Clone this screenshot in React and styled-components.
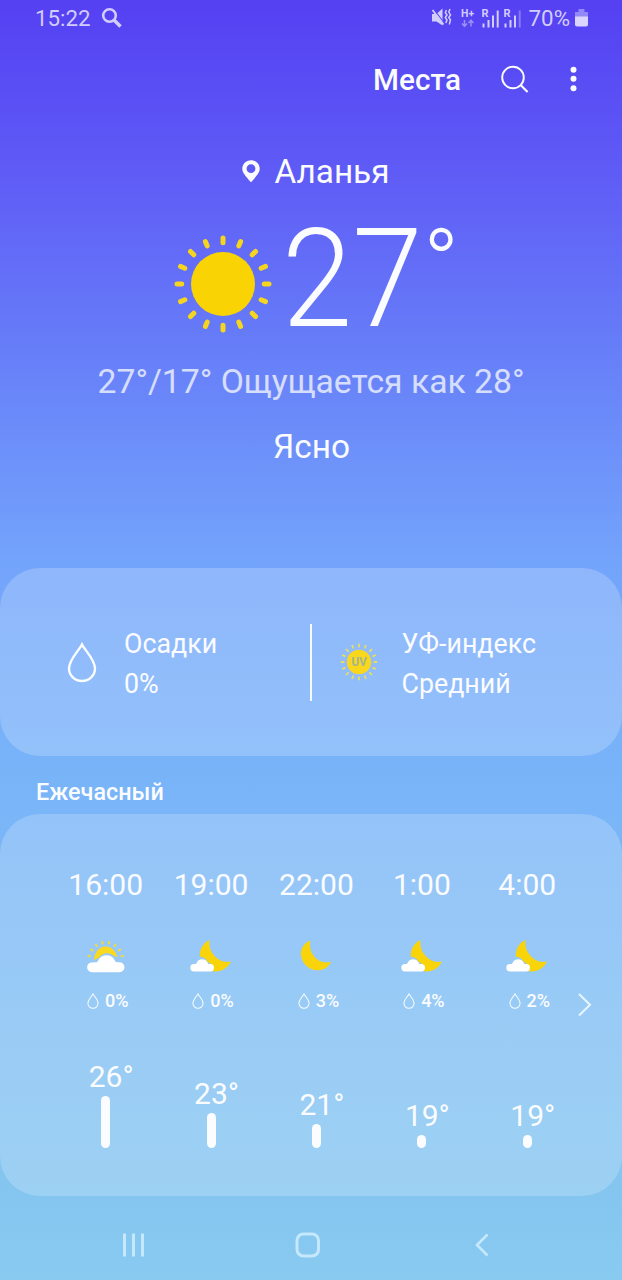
import React from "react";
import styled, { createGlobalStyle } from "styled-components";

const GlobalStyle = createGlobalStyle`
  * {
    box-sizing: border-box;
  }
  body {
    margin: 0;
    font-family: Roboto, "Open Sans", sans-serif;
    color: #fbfcff;
  }
  svg {
    display: block;
    flex: none;
  }
`;

const Screen = styled.div`
  display: flex;
  flex-direction: column;
  width: 622px;
  height: 1280px;
  overflow: hidden;
  background: linear-gradient(
    #5540f2 0,
    #584bf4 70px,
    #5f5bf6 170px,
    #667cf8 340px,
    #6e94fa 470px,
    #73a4fb 565px,
    #78b3f9 760px,
    #85c6f0 1200px,
    #88caf0 1280px
  );
`;

const StatusBar = styled.header`
  display: flex;
  align-items: center;
  justify-content: space-between;
  height: 36px;
  padding: 0 34px 0 35px;
  color: #d2cdfd;
  font-size: 22.3px;
  line-height: 35px;
`;

const StatusGroup = styled.div`
  display: flex;
  align-items: center;
  gap: ${({ gap }) => gap}px;
`;

const Percent = styled.span`
  margin: 0 1px 0 3px;
`;

const Toolbar = styled.nav`
  display: flex;
  align-items: center;
  justify-content: flex-end;
  height: 88px;
  padding-right: 44px;
`;

const PlacesButton = styled.button`
  padding: 0;
  margin-right: 39px;
  border: 0;
  background: transparent;
  color: inherit;
  font-family: inherit;
  font-size: 29.7px;
  font-weight: 500;
  line-height: 40px;
`;

const Hero = styled.section`
  display: flex;
  flex-direction: column;
  align-items: center;
  flex: none;
  height: 444px;
  padding-top: 24px;
`;

const Location = styled.div`
  display: flex;
  align-items: center;
  gap: 15px;
  height: 48px;
  padding-left: 9px;
  font-size: 33.3px;
  line-height: 48px;
`;

const Current = styled.div`
  display: flex;
  align-items: center;
  align-self: flex-start;
  height: 110px;
  margin-top: 28px;
  padding-left: 174px;
`;

const SunBox = styled.div`
  padding-top: 9px;
`;

const Temperature = styled.div`
  width: 143px;
  margin-left: 10px;
  font-size: 137px;
  font-weight: 300;
  line-height: 110px;
  white-space: nowrap;
  transform: scaleX(0.925);
  transform-origin: left;
`;

const DegreeSign = styled.div`
  align-self: flex-start;
  margin-left: -2px;
  font-size: 96px;
  font-weight: 300;
  line-height: 80px;
`;

const Range = styled.div`
  height: 40px;
  margin-top: 28px;
  font-size: 33.7px;
  line-height: 40px;
  opacity: 0.75;
`;

const Condition = styled.div`
  height: 40px;
  margin-top: 25px;
  padding-left: 1px;
  font-size: 33.4px;
  line-height: 40px;
`;

const Card = styled.section`
  flex: none;
  height: ${({ height }) => height}px;
  border-radius: 40px;
  background: rgba(255, 255, 255, 0.2);
`;

const Details = styled(Card)`
  display: grid;
  grid-template-columns: 310px 2px 310px;
  align-items: center;
`;

const Divider = styled.div`
  width: 2px;
  height: 77px;
  background: #f4faff;
`;

const Detail = styled.div`
  display: grid;
  grid-template-columns: ${({ icon }) => icon}px 1fr;
  align-items: center;
  padding-left: ${({ inset }) => inset}px;
  font-size: 26.8px;
  line-height: 40px;
`;

const DetailText = styled.div`
  padding-top: 4px;
`;

const SectionTitle = styled.h2`
  flex: none;
  height: 58px;
  margin: 0;
  padding: 14px 0 0 36px;
  font-size: 23.4px;
  font-weight: 500;
  line-height: 44px;
`;

const Hourly = styled(Card)`
  display: flex;
  align-items: flex-start;
  padding-left: 53px;
`;

const Hour = styled.div`
  display: flex;
  flex-direction: column;
  align-items: center;
  width: 105.4px;
`;

const Time = styled.div`
  margin-top: 51px;
  font-size: 30px;
  line-height: 40px;
`;

const IconBox = styled.div`
  margin-top: 34px;
`;

const Chance = styled.div`
  display: flex;
  align-items: center;
  gap: 6px;
  height: 24px;
  margin-top: 16px;
  padding-left: 4px;
  font-size: 18px;
  font-weight: 500;
  line-height: 24px;
`;

const Graph = styled.div`
  display: flex;
  flex-direction: column;
  align-items: center;
  justify-content: flex-end;
  height: 135px;
`;

const Degrees = styled.div`
  margin-bottom: -1px;
  padding-left: 11px;
  font-size: 30px;
  line-height: 40px;
`;

const Bar = styled.div`
  width: 9px;
  height: ${({ size }) => size}px;
  border-radius: 5px;
  background: #fbfcff;
`;

const NextButton = styled.button`
  display: flex;
  margin-top: 179px;
  margin-left: -2px;
  padding: 0;
  border: 0;
  background: transparent;
`;

const NavBar = styled.footer`
  display: grid;
  grid-template-columns: 268px 80px 268px;
  align-items: center;
  justify-items: center;
  height: 84px;
  padding-top: 14px;
`;

const ray = (angle, cx, cy, from, to) => {
  const a = (angle * Math.PI) / 180;
  return `M${cx + Math.sin(a) * from} ${cy - Math.cos(a) * from}L${
    cx + Math.sin(a) * to
  } ${cy - Math.cos(a) * to}`;
};

const sixteen = Array.from({ length: 16 }, (_, i) => i * 22.5);
const eight = Array.from({ length: 8 }, (_, i) => -78.75 + i * 22.5);

const Sun = () => (
  <svg width="98" height="98" viewBox="0 0 98 98">
    <circle cx="49" cy="49" r="32" fill="#f9d304" />
    <path
      d={sixteen.map((a) => ray(a, 49, 49, 41.3, 46)).join("")}
      stroke="#f6d51e"
      strokeWidth="5"
      strokeLinecap="round"
    />
  </svg>
);

const UvSun = () => (
  <svg width="38" height="38" viewBox="0 0 38 38">
    <circle cx="19" cy="19" r="12.2" fill="#fad61c" />
    <path
      d={sixteen.map((a) => ray(a, 19, 19, 15.4, 17.6)).join("")}
      stroke="#e8de5c"
      strokeWidth="1.8"
      strokeLinecap="round"
    />
    <text
      x="19"
      y="23.2"
      textAnchor="middle"
      fontSize="12"
      fontWeight="700"
      fill="#a5b691"
    >
      UV
    </text>
  </svg>
);

const Pin = () => (
  <svg width="18" height="24" viewBox="0 0 18 24">
    <path
      fillRule="evenodd"
      fill="#fbfcff"
      d="M9 .3C4 .3.3 4.1.3 8.7c0 3.8 2.7 6.6 8.7 13.6 6-7 8.7-9.8 8.7-13.6C17.7 4.1 14 .3 9 .3zM9 4.3a4.4 4.4 0 1 1 0 8.800 4.400 4.400 0 0 1 0-8.800z"
    />
  </svg>
);

const Drop = ({ width, height, stroke }) => (
  <svg width={width} height={height} viewBox="0 0 30 41">
    <path
      d="M15 2.5C12 8.5 2 17.5 2 26.5a13 12.5 0 0 0 26 0C28 17.5 18 8.5 15 2.5z"
      fill="none"
      stroke="#fbfeff"
      strokeWidth={stroke}
    />
  </svg>
);

const PartlySunny = () => (
  <svg width="44" height="34" viewBox="0 0 44 34">
    <path
      d={eight.map((a) => ray(a, 21.7, 20.3, 16, 17.6)).join("")}
      stroke="#efdc3c"
      strokeWidth="2"
      strokeLinecap="round"
    />
    <path
      d="M10 21.5a11.8 13.5 0 0 1 23.3-3.5c-2.4-.2-3.2-1-4.8-2-5-3.5-11.5-1.5-13.6 3.1-1.8.2-3.4 1-4.9 2.400z"
      fill="#fbd91f"
    />
    <path
      d="M8 33.200a4.900 4.900 0 0 1 0-9.800c1.200 0 2.400 0 4-.1 1.200 0 1.700-1 2.300-2.100a9.300 9.300 0 0 1 16.400 0c.6 1.100 1.200 2.100 2.500 2.100h2.300a4.900 4.900 0 0 1 0 9.900z"
      fill="#fff"
    />
  </svg>
);

const CloudyNight = () => (
  <svg width="44" height="34" viewBox="0 0 44 34">
    <path
      d="M20.500 1C14 4 10.300 10.500 10.900 17.800c4 .3 7 2.600 7.700 5.400 4 .5 6.600 4.500 5.300 9.200 8.300 1 15-3.500 18.100-9.900-4.700.9-8.500.6-12.500-2.200C22.500 15.500 19.500 8.500 20.500 1z"
      fill="#f9d40b"
    />
    <path
      d="M5 32.500a3.700 3.700 0 0 1 0-7.400h1c.9 0 1.300-.6 1.800-1.600a6.100 6.100 0 0 1 10.700 0c.5 1 1 1.600 1.900 1.600h.9a3.700 3.700 0 0 1 0 7.400z"
      fill="#fff"
    />
  </svg>
);

const ClearNight = () => (
  <svg width="44" height="34" viewBox="0 0 44 34">
    <path
      d="M16.300 1.500C9 4.500 5.800 11 7.300 17.700c2.200 9.800 11.200 15 19.500 13.200 4.800-1 8.200-4 10.200-8-4.700 1-9.200.5-13.200-2.200C17.300 16.200 15 9 16.300 1.500z"
      fill="#f9d40b"
    />
  </svg>
);

const Signal = ({ faded }) => (
  <svg width="18" height="22" viewBox="0 1.5 18 22">
    <text x="-.5" y="11" fontSize="11" fontWeight="700" fill="#d2cdfd">
      R
    </text>
    <path
      d="M1.500 18v4M6.500 14.500v7.500M11 10v12"
      stroke="#d2cdfd"
      strokeWidth="2"
    />
    <path
      d="M15.700 5v17"
      stroke="#d2cdfd"
      strokeWidth="2"
      opacity={faded ? 0.4 : 1}
    />
  </svg>
);

const weather = {
  partly: PartlySunny,
  cloudyNight: CloudyNight,
  clearNight: ClearNight,
};

const hours = [
  { time: "16:00", icon: "partly", chance: "0%", degrees: "26°", bar: 52 },
  { time: "19:00", icon: "cloudyNight", chance: "0%", degrees: "23°", bar: 35 },
  { time: "22:00", icon: "clearNight", chance: "3%", degrees: "21°", bar: 24 },
  { time: "1:00", icon: "cloudyNight", chance: "4%", degrees: "19°", bar: 13 },
  { time: "4:00", icon: "cloudyNight", chance: "2%", degrees: "19°", bar: 13 },
];

const App = () => {
  return (
    <Screen>
      <GlobalStyle />
      <StatusBar>
        <StatusGroup gap={10}>
          <span>15:22</span>
          <svg width="22" height="22" viewBox="0 0 22 22" fill="none">
            <circle cx="8.5" cy="8.5" r="6.3" stroke="#d2cdfd" strokeWidth="2.6" />
            <path d="M13 13l6.5 6.5" stroke="#d2cdfd" strokeWidth="3.6" />
          </svg>
        </StatusGroup>
        <StatusGroup gap={4}>
          <svg width="21" height="22" viewBox="0 0 21 22" fill="none">
            <path d="M1 7h4.500L11.500 1.500v17L5.500 14.500H1z" fill="#d2cdfd" />
            <path d="M2.500 2l10 13" stroke="#5844f2" strokeWidth="1.200" />
            <path d="M1.500 3l11 14.500" stroke="#d2cdfd" strokeWidth="1.800" />
            <path
              d="M15.500 3l-1.200 2.500 1.700 2.500-1.700 2.500 1.700 2.500-1.200 3M19 2L17.800 5l1.700 3-1.700 2.500 1.700 2.500-1.200 4.500"
              stroke="#d2cdfd"
              strokeWidth="1.500"
            />
          </svg>
          <svg width="22" height="22" viewBox="0 0 22 22" fill="none">
            <text x="5" y="10" fontSize="10.500" fontWeight="700" fill="#d2cdfd">
              H+
            </text>
            <path
              d="M8.500 13v6M6 16.500l2.500 2.800L11 16.500M15 19.500v-6M12.500 16l2.500-2.800 2.500 2.800"
              stroke="#9a8ff8"
              strokeWidth="1.500"
            />
          </svg>
          <Signal />
          <Signal faded />
          <Percent>70%</Percent>
          <svg width="13" height="20" viewBox="0 0 13 20">
            <path d="M3.500 1h6v3H13v5H0V4h3.500z" fill="#9388f8" />
            <path d="M0 8.500h13v8a2 2 0 0 1-2 2H2a2 2 0 0 1-2-2z" fill="#d9d5fe" />
          </svg>
        </StatusGroup>
      </StatusBar>
      <Toolbar>
        <PlacesButton>Места</PlacesButton>
        <svg width="30" height="30" viewBox="0 0 30 30" fill="none" stroke="#fbfcff">
          <circle cx="13" cy="12.5" r="10.8" strokeWidth="1.9" />
          <path d="M20.8 20.3l6.8 6.8" strokeWidth="2.1" />
        </svg>
        <svg width="48" height="30" viewBox="0 0 48 30" fill="#fbfcff">
          <circle cx="43.5" cy="4.8" r="3" />
          <circle cx="43.5" cy="13.8" r="3" />
          <circle cx="43.5" cy="23.3" r="3" />
        </svg>
      </Toolbar>
      <Hero>
        <Location>
          <Pin />
          <span>Аланья</span>
        </Location>
        <Current>
          <SunBox>
            <Sun />
          </SunBox>
          <Temperature>27</Temperature>
          <DegreeSign>°</DegreeSign>
        </Current>
        <Range>27°/17° Ощущается как 28°</Range>
        <Condition>Ясно</Condition>
      </Hero>
      <Details height={188}>
        <Detail inset={67} icon={57}>
          <Drop width={30} height={41} stroke={2.4} />
          <DetailText>
            <div>Осадки</div>
            <div>0%</div>
          </DetailText>
        </Detail>
        <Divider />
        <Detail inset={28} icon={61.5}>
          <UvSun />
          <DetailText>
            <div>УФ-индекс</div>
            <div>Средний</div>
          </DetailText>
        </Detail>
      </Details>
      <SectionTitle>Ежечасный</SectionTitle>
      <Hourly height={382}>
        {hours.map((hour) => {
          const Icon = weather[hour.icon];
          return (
            <Hour key={hour.time}>
              <Time>{hour.time}</Time>
              <IconBox>
                <Icon />
              </IconBox>
              <Chance>
                <Drop width={12} height={16} stroke={2.6} />
                <span>{hour.chance}</span>
              </Chance>
              <Graph>
                <Degrees>{hour.degrees}</Degrees>
                <Bar size={hour.bar} />
              </Graph>
            </Hour>
          );
        })}
        <NextButton>
          <svg width="14" height="24" viewBox="0 0 14 24" fill="none">
            <path d="M1 1l11 10.8L1 22.5" stroke="#eaf6ff" strokeWidth="2" />
          </svg>
        </NextButton>
      </Hourly>
      <NavBar>
        <svg width="24" height="26" viewBox="0 0 24 26">
          <path d="M2.5 1.5v23M11.5 1.5v23M20.5 1.5v23" stroke="#c5e8fc" strokeWidth="3" />
        </svg>
        <svg width="26" height="26" viewBox="0 0 26 26" fill="none">
          <rect x="2" y="2" width="21.5" height="22" rx="6.5" stroke="#c5e8fc" strokeWidth="3" />
        </svg>
        <svg width="16" height="26" viewBox="0 0 16 26" fill="none">
          <path d="M13.5 2.5L3 13l10.5 10.5" stroke="#c5e8fc" strokeWidth="2.6" />
        </svg>
      </NavBar>
    </Screen>
  );
};

export default App;
